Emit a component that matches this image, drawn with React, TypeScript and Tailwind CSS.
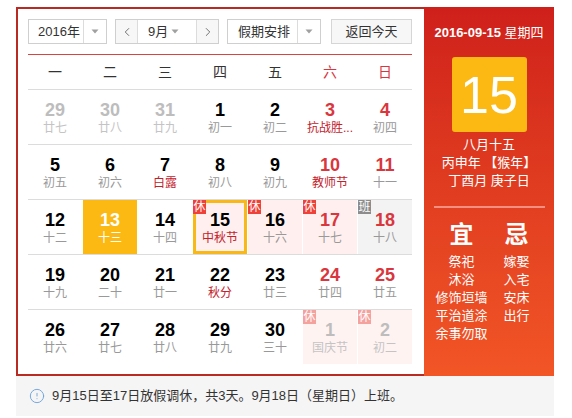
import { ChevronLeft, ChevronRight, CircleAlert } from "lucide-react";

// ─── Data ─────────────────────────────────────────────────────────────────────

type Day = {
  d: number;
  l: string;
  out?: boolean;
  redNum?: boolean;
  redLunar?: boolean;
  today?: boolean;
  selected?: boolean;
  badge?: "休" | "班";
};

const weeks: Day[][] = [
  [
    { d: 29, l: "廿七", out: true },
    { d: 30, l: "廿八", out: true },
    { d: 31, l: "廿九", out: true },
    { d: 1, l: "初一" },
    { d: 2, l: "初二" },
    { d: 3, l: "抗战胜...", redNum: true, redLunar: true },
    { d: 4, l: "初四", redNum: true },
  ],
  [
    { d: 5, l: "初五" },
    { d: 6, l: "初六" },
    { d: 7, l: "白露", redLunar: true },
    { d: 8, l: "初八" },
    { d: 9, l: "初九" },
    { d: 10, l: "教师节", redNum: true, redLunar: true },
    { d: 11, l: "十一", redNum: true },
  ],
  [
    { d: 12, l: "十二" },
    { d: 13, l: "十三", today: true },
    { d: 14, l: "十四" },
    { d: 15, l: "中秋节", redLunar: true, selected: true, badge: "休" },
    { d: 16, l: "十六", badge: "休" },
    { d: 17, l: "十七", redNum: true, badge: "休" },
    { d: 18, l: "十八", redNum: true, badge: "班" },
  ],
  [
    { d: 19, l: "十九" },
    { d: 20, l: "二十" },
    { d: 21, l: "廿一" },
    { d: 22, l: "秋分", redLunar: true },
    { d: 23, l: "廿三" },
    { d: 24, l: "廿四", redNum: true },
    { d: 25, l: "廿五", redNum: true },
  ],
  [
    { d: 26, l: "廿六" },
    { d: 27, l: "廿七" },
    { d: 28, l: "廿八" },
    { d: 29, l: "廿九" },
    { d: 30, l: "三十" },
    { d: 1, l: "国庆节", out: true, badge: "休" },
    { d: 2, l: "初二", out: true, badge: "休" },
  ],
];

const weekdays = ["一", "二", "三", "四", "五", "六", "日"];

const yi = ["祭祀", "沐浴", "修饰垣墙", "平治道涂", "余事勿取"];
const ji = ["嫁娶", "入宅", "安床", "出行"];

// ─── Bits ─────────────────────────────────────────────────────────────────────

function Tri() {
  return (
    <svg width="8" height="5" viewBox="0 0 8 5" aria-hidden="true">
      <path d="M0.5 0.5h7L4 4.5z" fill="#a0a0a0" />
    </svg>
  );
}

function Cell({ c }: { c: Day }) {
  let bg = "bg-white";
  if (c.today) bg = "bg-[#fdb913]";
  else if (c.badge === "班") bg = "bg-[#f3f3f3]";
  else if (c.badge && c.out) bg = "bg-[#fff3f2]";
  else if (c.badge) bg = "bg-[#fff0ef]";

  let numColor = "text-[#000]";
  if (c.today) numColor = "text-white";
  else if (c.out) numColor = "text-[#bdbdbd]";
  else if (c.redNum) numColor = "text-[#d9363e]";

  let lunarColor = "text-[#999]";
  if (c.today) lunarColor = "text-white";
  else if (c.out) lunarColor = "text-[#c4c4c4]";
  else if (c.redLunar) lunarColor = "text-[#c3212c]";

  let badgeColor = "bg-[#f0403a]";
  if (c.badge === "班") badgeColor = "bg-[#8c8c8c]";
  else if (c.out) badgeColor = "bg-[#f5a29f]";

  return (
    <div
      className={`relative h-[54px] text-center ${bg} ${
        c.selected ? "shadow-[inset_0_0_0_3px_#f8b918]" : ""
      }`}
    >
      {c.badge && (
        <span
          className={`absolute left-0 top-0 h-[14px] w-[13px] text-[12px] leading-[14px] text-white ${badgeColor}`}
        >
          {c.badge}
        </span>
      )}
      <div className={`pt-[10px] text-[18px] font-bold leading-[20px] ${numColor}`}>
        {c.d}
      </div>
      <div className={`text-[12px] leading-[16px] ${lunarColor}`}>{c.l}</div>
    </div>
  );
}

// ─── App ──────────────────────────────────────────────────────────────────────

export default function App() {
  return (
    <div className="min-h-screen bg-white pl-[16px] pt-[7px] font-['Liberation_Sans','Noto_Sans_CJK_SC',sans-serif] [text-spacing-trim:space-all]">
      <div className="w-[538px]">
        <div className="flex">
          {/* Calendar */}
          <div className="w-[408px] border-y-2 border-l-2 border-[#b82a22] pb-[10px] pl-[10px] pr-[12px] pt-[10px]">
            {/* Controls */}
            <div className="flex h-[25px] text-[13px] text-[#333]">
              <div className="flex w-[79px] border border-[#cfcfcf] bg-white">
                <span className="w-[54px] pl-[9px] leading-[23px]">2016年</span>
                <span className="flex flex-1 items-center justify-center border-l border-[#dcdcdc]">
                  <Tri />
                </span>
              </div>

              <div className="ml-[8px] flex w-[104px] border border-[#cfcfcf]">
                <span className="flex w-[21px] items-center justify-center bg-[#f7f7f7] text-[#555]">
                  <ChevronLeft size={14} strokeWidth={1.4} />
                </span>
                <span className="flex w-[60px] items-center border-x border-[#dcdcdc] bg-white">
                  <span className="pl-[10px] leading-[23px]">9月</span>
                  <span className="ml-auto mr-[17px] flex">
                    <Tri />
                  </span>
                </span>
                <span className="flex flex-1 items-center justify-center bg-[#f7f7f7] text-[#555]">
                  <ChevronRight size={14} strokeWidth={1.4} />
                </span>
              </div>

              <div className="ml-[8px] flex w-[94px] border border-[#cfcfcf] bg-white">
                <span className="w-[69px] pl-[10px] leading-[23px]">假期安排</span>
                <span className="flex flex-1 items-center justify-center border-l border-[#dcdcdc]">
                  <Tri />
                </span>
              </div>

              <div className="ml-[10px] flex w-[81px] items-center justify-center border border-[#d6d6d6] bg-[#f7f7f7]">
                返回今天
              </div>
            </div>

            <div className="mt-[10px] h-px bg-[#d6453f]" />

            {/* Weekdays */}
            <div className="grid h-[34px] grid-cols-7 gap-x-px text-[14px]">
              {weekdays.map((w, i) => (
                <div
                  key={w}
                  className={`flex items-center justify-center ${
                    i >= 5 ? "text-[#d9363e]" : "text-[#333]"
                  }`}
                >
                  {w}
                </div>
              ))}
            </div>

            {/* Days */}
            {weeks.map((week, wi) => (
              <div key={wi}>
                <div className="h-px bg-[#dcdcdc]" />
                <div className="grid grid-cols-7 gap-x-px">
                  {week.map((c, ci) => (
                    <Cell key={ci} c={c} />
                  ))}
                </div>
              </div>
            ))}
          </div>

          {/* Detail panel */}
          <div className="flex w-[130px] flex-col items-center bg-linear-to-b from-[#cf1f1b] to-[#f25526] pt-[18px] text-white">
            <div className="text-[13px] leading-[16px]">
              <span className="font-bold">2016-09-15</span> 星期四
            </div>
            <div className="mt-[16px] flex h-[75px] w-[75px] items-center justify-center rounded-[3px] bg-[#fdb913] text-[52px] leading-none">
              15
            </div>
            <div className="mt-[4px] text-center text-[13px] leading-[18px]">
              <div>八月十五</div>
              <div>丙申年 【猴年】</div>
              <div>丁酉月 庚子日</div>
            </div>
            <div className="mt-[16px] h-[2px] w-[111px] bg-[#f1907f]" />
            <div className="mt-[13px] grid grid-cols-[55px_55px] text-center">
              <div className="text-[24px] font-bold leading-[28px]">宜</div>
              <div className="text-[24px] font-bold leading-[28px]">忌</div>
              <div className="mt-[4px] text-[13px] leading-[18px]">
                {yi.map((t) => (
                  <div key={t}>{t}</div>
                ))}
              </div>
              <div className="mt-[4px] text-[13px] leading-[18px]">
                {ji.map((t) => (
                  <div key={t}>{t}</div>
                ))}
              </div>
            </div>
          </div>
        </div>

        {/* Notice */}
        <div className="flex h-[40px] items-center gap-[7px] bg-[#f5f5f5] pl-[13px] text-[13px] text-[#333]">
          <CircleAlert size={16} strokeWidth={1.4} className="text-[#6ea2da]" />
          <span>9月15日至17日放假调休，共3天。9月18日（星期日）上班。</span>
        </div>
      </div>
    </div>
  );
}
